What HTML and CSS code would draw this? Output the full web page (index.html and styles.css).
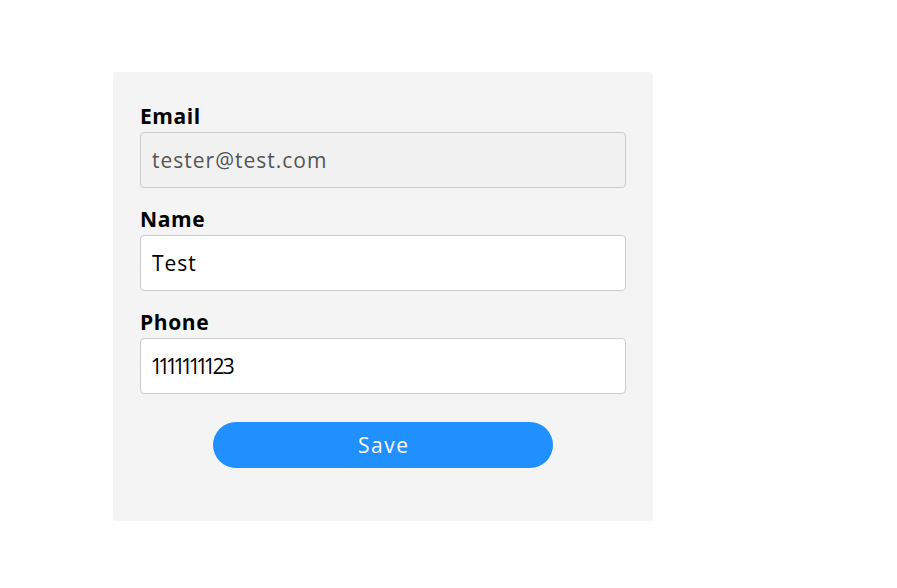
FILE: index.html
```html
<!DOCTYPE html>
<html>
<head>
<meta charset="utf-8">
<link rel="stylesheet" href="styles.css">
</head>
<body>
<div class="page">
  <form class="card">
    <div class="field">
      <label class="label">Email</label>
      <input class="input input-disabled" type="text" value="tester@test.com" disabled>
    </div>
    <div class="field">
      <label class="label">Name</label>
      <input class="input" type="text" value="Test">
    </div>
    <div class="field">
      <label class="label">Phone</label>
      <input class="input input-phone" type="text" value="1111111123">
    </div>
    <div class="actions">
      <button class="save" type="button">Save</button>
    </div>
  </form>
</div>
</body>
</html>
```

FILE: styles.css
```css
html, body {
  margin: 0;
  padding: 0;
  background: #ffffff;
}

.page {
  padding: 72px 0 0 113px;
  font-family: "Open Sans", "Noto Sans", sans-serif;
  font-variant-numeric: proportional-nums;
}

.card {
  box-sizing: border-box;
  width: 540px;
  height: 449px;
  background: #f4f4f4;
  border-radius: 4px;
  padding: 30px 27px 0 27px;
  display: flex;
  flex-direction: column;
}

.field {
  display: flex;
  flex-direction: column;
  margin-bottom: 17px;
}

.label {
  font-size: 21px;
  font-weight: 700;
  line-height: 28px;
  height: 30px;
  color: #000;
  letter-spacing: 0.6px;
}

.input {
  box-sizing: border-box;
  height: 56px;
  width: 100%;
  border: 1px solid #cccccc;
  border-radius: 4px;
  background: #ffffff;
  padding: 0 11px;
  font-family: inherit;
  font-variant-numeric: proportional-nums;
  font-size: 21px;
  letter-spacing: 1px;
  color: #000;
  outline: none;
}

.input-phone {
  letter-spacing: -1.5px;
}

.input-disabled {
  background: #f1f1f1;
  color: #555555;
  -webkit-text-fill-color: #555555;
  opacity: 1;
}

.actions {
  display: flex;
  justify-content: center;
  margin-top: 11px;
}

.save {
  width: 340px;
  height: 46px;
  border: none;
  border-radius: 23px;
  background: #2190ff;
  color: #ffffff;
  font-family: inherit;
  font-size: 21px;
  letter-spacing: 1.5px;
  padding: 0 0 0 1.5px;
  cursor: pointer;
}
```
